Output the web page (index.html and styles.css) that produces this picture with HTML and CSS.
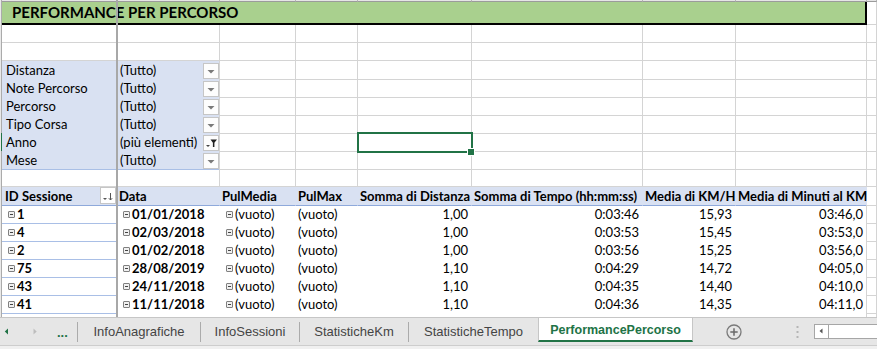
FILE: index.html
```html
<!DOCTYPE html>
<html lang="it">
<head>
  <meta charset="UTF-8">
  <title>PerformancePercorso</title>
  <link rel="stylesheet" href="styles.css">
</head>
<body>
  <div class="sheet">
    <div class="row colhead">
      <div class="rh"></div><div class="c"></div><div class="c"></div><div class="c"></div><div class="c"></div><div class="c"></div><div class="c"></div><div class="c"></div><div class="c"></div><div class="c"></div>
    </div>

    <div class="row title-row">
      <div class="rh"></div>
      <div class="c title">PERFORMANCE PER PERCORSO</div>
      <div class="c"></div>
    </div>

    <div class="row">
      <div class="rh"></div><div class="c"></div><div class="c"></div><div class="c"></div><div class="c"></div><div class="c"></div><div class="c"></div><div class="c"></div><div class="c"></div><div class="c"></div>
    </div>
    <div class="row">
      <div class="rh"></div><div class="c"></div><div class="c"></div><div class="c"></div><div class="c"></div><div class="c"></div><div class="c"></div><div class="c"></div><div class="c"></div><div class="c"></div>
    </div>

    <!-- filtri della tabella pivot -->
    <div class="row">
      <div class="rh"></div>
      <div class="c fa">Distanza</div>
      <div class="c fb"><span>(Tutto)</span><span class="dd"><svg width="14" height="14" viewBox="0 0 14 14"><path d="M3.5 6h7L7 9.5z" fill="#7a7a7a"/></svg></span></div>
      <div class="c"></div><div class="c"></div><div class="c"></div><div class="c"></div><div class="c"></div><div class="c"></div><div class="c"></div>
    </div>
    <div class="row">
      <div class="rh"></div>
      <div class="c fa">Note Percorso</div>
      <div class="c fb"><span>(Tutto)</span><span class="dd"><svg width="14" height="14" viewBox="0 0 14 14"><path d="M3.5 6h7L7 9.5z" fill="#7a7a7a"/></svg></span></div>
      <div class="c"></div><div class="c"></div><div class="c"></div><div class="c"></div><div class="c"></div><div class="c"></div><div class="c"></div>
    </div>
    <div class="row">
      <div class="rh"></div>
      <div class="c fa">Percorso</div>
      <div class="c fb"><span>(Tutto)</span><span class="dd"><svg width="14" height="14" viewBox="0 0 14 14"><path d="M3.5 6h7L7 9.5z" fill="#7a7a7a"/></svg></span></div>
      <div class="c"></div><div class="c"></div><div class="c"></div><div class="c"></div><div class="c"></div><div class="c"></div><div class="c"></div>
    </div>
    <div class="row">
      <div class="rh"></div>
      <div class="c fa">Tipo Corsa</div>
      <div class="c fb"><span>(Tutto)</span><span class="dd"><svg width="14" height="14" viewBox="0 0 14 14"><path d="M3.5 6h7L7 9.5z" fill="#7a7a7a"/></svg></span></div>
      <div class="c"></div><div class="c"></div><div class="c"></div><div class="c"></div><div class="c"></div><div class="c"></div><div class="c"></div>
    </div>
    <div class="row">
      <div class="rh on"></div>
      <div class="c fa">Anno</div>
      <div class="c fb"><span>(più elementi)</span><span class="dd"><svg width="14" height="14" viewBox="0 0 14 14"><path d="M2 9h4l-2 2z" fill="#444"/><path d="M6.5 3.5h6.5l-2.6 3.2V11H8.9V6.7z" fill="#222"/></svg></span></div>
      <div class="c"></div><div class="c"></div><div class="c sel"></div><div class="c"></div><div class="c"></div><div class="c"></div><div class="c"></div>
    </div>
    <div class="row last-filter">
      <div class="rh"></div>
      <div class="c fa">Mese</div>
      <div class="c fb"><span>(Tutto)</span><span class="dd"><svg width="14" height="14" viewBox="0 0 14 14"><path d="M3.5 6h7L7 9.5z" fill="#7a7a7a"/></svg></span></div>
      <div class="c"></div><div class="c"></div><div class="c"></div><div class="c"></div><div class="c"></div><div class="c"></div><div class="c"></div>
    </div>

    <div class="row">
      <div class="rh"></div><div class="c"></div><div class="c"></div><div class="c"></div><div class="c"></div><div class="c"></div><div class="c"></div><div class="c"></div><div class="c"></div><div class="c"></div>
    </div>

    <!-- intestazione pivot -->
    <div class="row">
      <div class="rh"></div>
      <div class="c h hA"><span>ID Sessione</span><span class="sortbtn"><svg width="14" height="16" viewBox="0 0 14 16"><path d="M2 10h4l-2 2z" fill="#555"/><path d="M9.5 5v7M7.8 10.2l1.7 1.8 1.7-1.8" stroke="#555" stroke-width="1" fill="none"/></svg></span></div>
      <div class="c h">Data</div>
      <div class="c h">PulMedia</div>
      <div class="c h">PulMax</div>
      <div class="c h">Somma di Distanza</div>
      <div class="c h">Somma di Tempo (hh:mm:ss)</div>
      <div class="c h">Media di KM/H</div>
      <div class="c h">Media di Minuti al KM</div>
      <div class="c"></div>
    </div>

    <div class="row">
      <div class="rh"></div>
      <div class="c id"><i class="ex"></i>1</div>
      <div class="c d db"><i class="ex"></i>01/01/2018</div>
      <div class="c d dc"><i class="ex"></i>(vuoto)</div>
      <div class="c d">(vuoto)</div>
      <div class="c d n">1,00</div>
      <div class="c d n">0:03:46</div>
      <div class="c d n">15,93</div>
      <div class="c d n end">03:46,0</div>
      <div class="c"></div>
    </div>
    <div class="row">
      <div class="rh"></div>
      <div class="c id"><i class="ex"></i>4</div>
      <div class="c d db"><i class="ex"></i>02/03/2018</div>
      <div class="c d dc"><i class="ex"></i>(vuoto)</div>
      <div class="c d">(vuoto)</div>
      <div class="c d n">1,00</div>
      <div class="c d n">0:03:53</div>
      <div class="c d n">15,45</div>
      <div class="c d n end">03:53,0</div>
      <div class="c"></div>
    </div>
    <div class="row">
      <div class="rh"></div>
      <div class="c id"><i class="ex"></i>2</div>
      <div class="c d db"><i class="ex"></i>01/02/2018</div>
      <div class="c d dc"><i class="ex"></i>(vuoto)</div>
      <div class="c d">(vuoto)</div>
      <div class="c d n">1,00</div>
      <div class="c d n">0:03:56</div>
      <div class="c d n">15,25</div>
      <div class="c d n end">03:56,0</div>
      <div class="c"></div>
    </div>
    <div class="row">
      <div class="rh"></div>
      <div class="c id"><i class="ex"></i>75</div>
      <div class="c d db"><i class="ex"></i>28/08/2019</div>
      <div class="c d dc"><i class="ex"></i>(vuoto)</div>
      <div class="c d">(vuoto)</div>
      <div class="c d n">1,10</div>
      <div class="c d n">0:04:29</div>
      <div class="c d n">14,72</div>
      <div class="c d n end">04:05,0</div>
      <div class="c"></div>
    </div>
    <div class="row">
      <div class="rh"></div>
      <div class="c id"><i class="ex"></i>43</div>
      <div class="c d db"><i class="ex"></i>24/11/2018</div>
      <div class="c d dc"><i class="ex"></i>(vuoto)</div>
      <div class="c d">(vuoto)</div>
      <div class="c d n">1,10</div>
      <div class="c d n">0:04:35</div>
      <div class="c d n">14,40</div>
      <div class="c d n end">04:10,0</div>
      <div class="c"></div>
    </div>
    <div class="row">
      <div class="rh"></div>
      <div class="c id"><i class="ex"></i>41</div>
      <div class="c d db"><i class="ex"></i>11/11/2018</div>
      <div class="c d dc"><i class="ex"></i>(vuoto)</div>
      <div class="c d">(vuoto)</div>
      <div class="c d n">1,10</div>
      <div class="c d n">0:04:36</div>
      <div class="c d n">14,35</div>
      <div class="c d n end">04:11,0</div>
      <div class="c"></div>
    </div>
    <div class="row">
      <div class="rh"></div>
      <div class="c id"></div>
      <div class="c d"></div><div class="c d"></div><div class="c d"></div><div class="c d"></div><div class="c d"></div><div class="c d"></div><div class="c d end"></div>
      <div class="c"></div>
    </div>

    <div class="freeze"></div>
  </div>

  <div class="tabbar">
    <div class="tabrow">
      <div class="nav">
        <svg width="44" height="27" viewBox="0 0 44 27"><path d="M8 10.5v6l-3.2-3z" fill="#217346"/><path d="M33.5 10.5v6l3.2-3z" fill="#bdbdbd"/></svg>
        <span class="more">...</span>
      </div>
      <div class="tab w1">InfoAnagrafiche</div>
      <div class="tab w2">InfoSessioni</div>
      <div class="tab w3">StatisticheKm</div>
      <div class="tab w4">StatisticheTempo</div>
      <div class="tab active">PerformancePercorso</div>
      <div class="add">
        <svg width="16" height="16" viewBox="0 0 16 16"><circle cx="8" cy="8" r="7" fill="none" stroke="#7a7a7a" stroke-width="1.3"/><path d="M8 4.3v7.4M4.3 8h7.4" stroke="#6a6a6a" stroke-width="1.5"/></svg>
      </div>
      <div class="grip">
        <svg width="3" height="14" viewBox="0 0 3 14"><rect x="0.5" y="1" width="2" height="2" fill="#b5b5b5"/><rect x="0.5" y="6" width="2" height="2" fill="#b5b5b5"/><rect x="0.5" y="11" width="2" height="2" fill="#b5b5b5"/></svg>
      </div>
      <div class="hscroll">
        <div class="sbtn"><svg width="13" height="12" viewBox="0 0 13 12"><path d="M7.5 3.5v5l-3-2.5z" fill="#555"/></svg></div>
        <div class="track"></div>
      </div>
    </div>
  </div>
</body>
</html>
```

FILE: styles.css
```css
body {
  margin: 0;
  width: 877px;
  height: 349px;
  overflow: hidden;
  background-color: #fff;
  font-family: Lato, "Liberation Sans", sans-serif;
}

/* foglio */
.sheet {
  position: relative;
  height: 317px;
  overflow: hidden;
}
.row {
  display: grid;
  grid-template-columns: 2px 115px 103px 76px 62px 114px 171px 93px 131px 10px;
  height: 18px;
}
.rh {
  box-sizing: border-box;
  background-color: #e9e9e9;
  border-right: 1px solid #ababab;
}
.rh.on {
  border-right-color: #217346;
}
.c {
  box-sizing: border-box;
  border-right: 1px solid #d4d4d4;
  border-bottom: 1px solid #d4d4d4;
  padding: 0 3px;
  font-size: 13px;
  line-height: 18px;
  white-space: nowrap;
  color: #000;
}

.colhead {
  height: 2px;
}
.colhead .c {
  background-color: #e6e6e6;
  border-right-color: #b5b5b5;
  border-bottom-color: #9b9b9b;
}

/* titolo */
.title-row {
  height: 23px;
}
.title {
  grid-column: 2 / 10;
  background-color: #a9d08e;
  border-bottom: 2px solid #000;
  border-right: 2px solid #000;
  padding-left: 10px;
  font-size: 15px;
  font-weight: bold;
  line-height: 21px;
}

/* filtri */
.fa, .fb {
  background-color: #d9e1f2;
  border-bottom-color: #d9e1f2;
}
.fa {
  padding-left: 4px;
}
.fb {
  display: flex;
  justify-content: space-between;
  padding-right: 0;
}
.last-filter .fa, .last-filter .fb {
  border-bottom-color: #a9bfe6;
}
.dd {
  box-sizing: border-box;
  width: 16px;
  height: 16px;
  align-self: flex-end;
  border: 1px solid #c6c6c6;
  background-color: #fdfdfd;
}
.dd svg {
  display: block;
}

/* selezione */
.sel {
  position: relative;
}
.sel::after {
  content: "";
  position: absolute;
  left: -1px;
  top: -1px;
  right: -2px;
  bottom: -2px;
  border: 2px solid #217346;
}
.sel::before {
  content: "";
  position: absolute;
  right: -4px;
  bottom: -5px;
  width: 6px;
  height: 6px;
  border: 1px solid #fff;
  background-color: #217346;
  z-index: 2;
}

/* intestazione pivot */
.h {
  background-color: #d9e1f2;
  border-right-color: #d9e1f2;
  border-bottom-color: #8ea9db;
  font-weight: bold;
  padding-left: 2px;
}
.hA {
  display: flex;
  justify-content: space-between;
  padding-left: 3px;
  padding-right: 1px;
  border-right: none;
}
.sortbtn {
  box-sizing: border-box;
  width: 16px;
  height: 17px;
  border: 1px solid #c6c6c6;
  background-color: #fff;
}
.sortbtn svg {
  display: block;
}

/* righe dati */
.id {
  font-weight: bold;
  padding-left: 6px;
  border-right: none;
  border-bottom-color: #a9bfe6;
}
.d {
  border-right-color: transparent;
  border-bottom-color: transparent;
  padding-left: 2px;
}
.db {
  font-weight: bold;
  padding-left: 6px;
}
.dc {
  padding-left: 6px;
}
.n {
  text-align: right;
  padding-right: 3px;
}
.end {
  border-right-color: #d4d4d4;
}
.ex {
  display: inline-block;
  width: 5px;
  height: 5px;
  margin-right: 2px;
  border: 1px solid #808080;
  border-radius: 1px;
  background: linear-gradient(#444, #444) center / 3px 1px no-repeat, #f0f0f0;
  vertical-align: 1px;
}

.freeze {
  position: absolute;
  left: 116px;
  top: 0;
  bottom: 0;
  width: 2px;
  background-color: #a8a8a8;
}

/* barra dei fogli */
.tabbar {
  height: 31px;
  border-top: 1px solid #c6c6c6;
  background-color: #f0f0f0;
  font-family: "Liberation Sans", Arial, sans-serif;
  font-size: 13px;
  color: #444;
}
.tabrow {
  display: flex;
  height: 27px;
  background-color: #e6e6e6;
  border-bottom: 1px solid #cdcdcd;
}
.nav {
  width: 77px;
  display: flex;
  align-items: center;
}
.nav svg {
  display: block;
}
.more {
  margin-left: 13px;
  margin-top: 1px;
  font-weight: bold;
  color: #217346;
}
.tab {
  box-sizing: border-box;
  height: 20px;
  align-self: center;
  border-left: 1px solid #ababab;
  text-align: center;
  line-height: 20px;
  white-space: nowrap;
}
.w1 { width: 123px; }
.w2 { width: 99px; }
.w3 { width: 109px; }
.w4 { width: 130px; }
.tab.active {
  width: 155px;
  height: 24px;
  align-self: flex-start;
  padding-top: 2px;
  border-left: 1px solid #c6c6c6;
  border-right: 1px solid #c6c6c6;
  border-bottom: 2px solid #217346;
  background-color: #fff;
  color: #217346;
  font-size: 12.5px;
  font-weight: bold;
}
.add {
  width: 82px;
  display: flex;
  justify-content: center;
  align-items: center;
}
.grip {
  margin-left: 21px;
  display: flex;
  align-items: center;
}
.grip svg {
  display: block;
}
.hscroll {
  margin-left: 15px;
  flex: 1;
  display: flex;
  align-self: center;
  height: 15px;
}
.sbtn {
  box-sizing: border-box;
  width: 15px;
  border: 1px solid #a6a6a6;
  background-color: #fff;
}
.sbtn svg {
  display: block;
}
.track {
  flex: 1;
  box-sizing: border-box;
  border-top: 1px solid #a6a6a6;
  border-bottom: 1px solid #a6a6a6;
  background-color: #fff;
}
```
